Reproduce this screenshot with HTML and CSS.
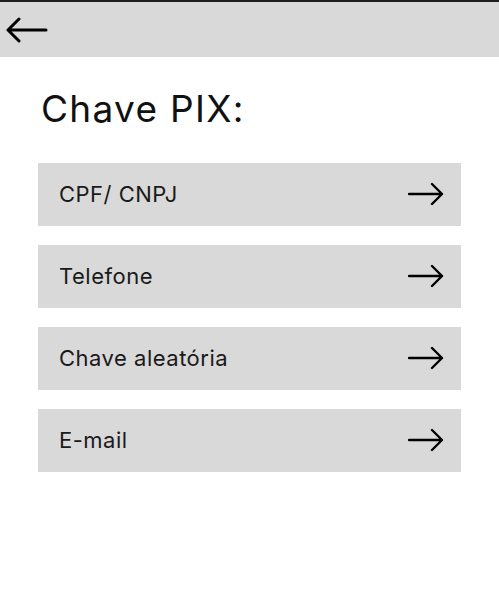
FILE: index.html
```html
<!DOCTYPE html>
<html lang="pt-BR">
<head>
<meta charset="utf-8">
<title>Chave PIX</title>
<link rel="stylesheet" href="styles.css">
</head>
<body>
<header class="topbar">
  <button class="back" aria-label="Voltar">
    <svg width="42" height="26" viewBox="0 0 42 26" fill="none" stroke="#000" stroke-width="3" stroke-linecap="round" stroke-linejoin="round">
      <path d="M40 13H2M13 2L2 13L13 24"/>
    </svg>
  </button>
</header>
<main class="content">
  <h1 class="title">Chave PIX:</h1>
  <ul class="options">
    <li class="option"><span>CPF/ CNPJ</span><svg class="go" width="36" height="24" viewBox="0 0 36 24" fill="none" stroke="#000" stroke-width="2.4" stroke-linecap="round" stroke-linejoin="round"><path d="M1 12H34M24 2L34 12L24 22"/></svg></li>
    <li class="option"><span>Telefone</span><svg class="go" width="36" height="24" viewBox="0 0 36 24" fill="none" stroke="#000" stroke-width="2.4" stroke-linecap="round" stroke-linejoin="round"><path d="M1 12H34M24 2L34 12L24 22"/></svg></li>
    <li class="option"><span>Chave aleatória</span><svg class="go" width="36" height="24" viewBox="0 0 36 24" fill="none" stroke="#000" stroke-width="2.4" stroke-linecap="round" stroke-linejoin="round"><path d="M1 12H34M24 2L34 12L24 22"/></svg></li>
    <li class="option"><span>E-mail</span><svg class="go" width="36" height="24" viewBox="0 0 36 24" fill="none" stroke="#000" stroke-width="2.4" stroke-linecap="round" stroke-linejoin="round"><path d="M1 12H34M24 2L34 12L24 22"/></svg></li>
  </ul>
</main>
</body>
</html>
```
FILE: styles.css
```css
* { box-sizing: border-box; }
html, body {
  margin: 0;
  padding: 0;
  background: #fff;
  font-family: Inter, "Noto Sans", sans-serif;
  color: #000;
}
.topbar {
  height: 57px;
  background: #d9d9d9;
  border-top: 2px solid #1e1e1e;
  display: flex;
  align-items: center;
  padding-left: 6px;
}
.back {
  border: 0;
  background: none;
  padding: 0;
  display: flex;
  cursor: pointer;
}
.content {
  padding: 30px 38px 0 38px;
}
.title {
  margin: 0 0 32px 0;
  font-size: 37px;
  line-height: 44px;
  font-weight: 400;
  letter-spacing: 1.3px;
  padding-left: 3px;
  color: #111;
}
.options {
  list-style: none;
  margin: 0;
  padding: 0;
  width: 423px;
  display: flex;
  flex-direction: column;
  gap: 19.5px;
}
.option {
  height: 62.5px;
  background: #d9d9d9;
  display: flex;
  align-items: center;
  justify-content: space-between;
  padding: 0 17px 0 21px;
  font-size: 22px;
  letter-spacing: 0.5px;
  color: #1a1a1a;
}
.go { display: block; }
```
